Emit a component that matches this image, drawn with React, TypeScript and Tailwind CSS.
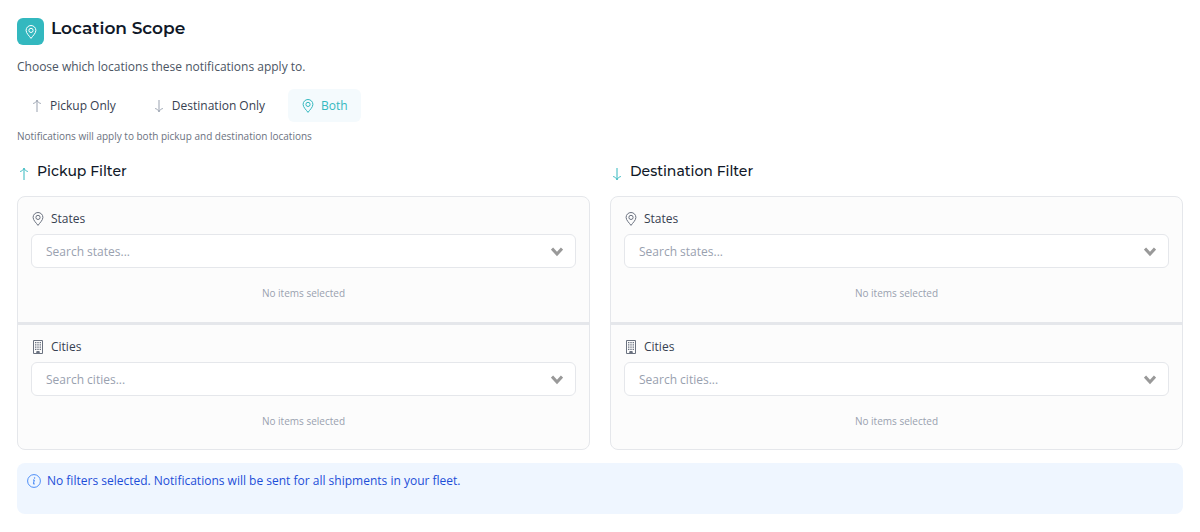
import { useState } from "react";
import type { ReactNode } from "react";
import clsx from "clsx";

type IconProps = { className?: string };

const PinIcon = ({ className }: IconProps) => (
  <svg viewBox="0 0 14 14" fill="none" stroke="currentColor" className={className}>
    <path d="M7 13.400C5.600 11.200 2.100 8.400 2.100 5.400a4.900 4.900 0 0 1 9.800 0c0 3-3.500 5.800-4.900 8Z" />
    <circle cx="7" cy="5.400" r="2.100" />
  </svg>
);

const ArrowUpIcon = ({ className }: IconProps) => (
  <svg viewBox="0 0 14 14" fill="none" stroke="currentColor" className={className}>
    <path d="M7 13V1.200M3.200 4.500C5 4 6.500 2.800 7 1.200c.5 1.600 2 2.800 3.800 3.300" />
  </svg>
);

const ArrowDownIcon = ({ className }: IconProps) => (
  <svg viewBox="0 0 14 14" fill="none" stroke="currentColor" className={className}>
    <path d="M7 1v11.800M3.200 9.500C5 10 6.500 11.200 7 12.800c.5-1.600 2-2.800 3.800-3.300" />
  </svg>
);

const BuildingIcon = ({ className }: IconProps) => (
  <svg viewBox="0 0 14 14" fill="none" stroke="currentColor" className={className}>
    <path d="M2.500.5h9v13h-9z" />
    <path
      d="M4 2.700h1.400M6.300 2.700h1.400M8.600 2.700h1.400M4 4.900h1.400M6.300 4.900h1.400M8.600 4.900h1.400M4 7.100h1.400M6.300 7.100h1.400M8.600 7.100h1.400M4 9.300h1.400M6.300 9.300h1.400M8.600 9.300h1.400"
      strokeWidth="1.300"
    />
    <path d="M5.800 13.500v-2h2.400v2z" fill="currentColor" />
  </svg>
);

const InfoIcon = ({ className }: IconProps) => (
  <svg viewBox="0 0 14 14" fill="none" stroke="currentColor" className={className}>
    <circle cx="7" cy="7" r="6.400" strokeWidth=".9" />
    <path d="M6 6h1.300l-.9 3.800c0 .5.700.4 1.400 0" />
    <circle cx="7.600" cy="3.900" r=".5" fill="currentColor" strokeWidth=".4" />
  </svg>
);

const ChevronIcon = ({ className }: IconProps) => (
  <svg viewBox="0 0 12 10" fill="none" stroke="currentColor" strokeWidth="3" className={className}>
    <path d="m1 1.500 5 5.500 5-5.500" />
  </svg>
);

const scopes = [
  { id: "pickup", label: "Pickup Only", Icon: ArrowUpIcon },
  { id: "destination", label: "Destination Only", Icon: ArrowDownIcon },
  { id: "both", label: "Both", Icon: PinIcon },
];

type SearchFieldProps = {
  id: string;
  label: string;
  placeholder: string;
  icon: ReactNode;
};

const SearchField = ({ id, label, placeholder, icon }: SearchFieldProps) => (
  <div className="px-[13px] pt-3 pb-[19px] last:pb-[18px]">
    <label htmlFor={id} className="flex items-center gap-1.5 text-[12px] leading-5 text-[#374151]">
      <span className="text-[#6b7280]">{icon}</span>
      {label}
    </label>
    <div className="mt-[5px] flex h-[34px] items-center rounded-md border border-gray-200 bg-white pt-0.5 pr-3 pl-3.5">
      <input
        id={id}
        type="text"
        placeholder={placeholder}
        className="min-w-0 flex-1 bg-transparent text-[12px] text-gray-700 outline-none placeholder:text-gray-400"
      />
      <button type="button" aria-label={"Show " + label.toLowerCase()} className="text-[#999999]">
        <ChevronIcon className="h-2.5 w-3" />
      </button>
    </div>
    <p className="mt-[15px] text-center text-[10px] leading-5 text-gray-400">No items selected</p>
  </div>
);

type FilterProps = { id: string; title: string; icon: ReactNode };

const FilterColumn = ({ id, title, icon }: FilterProps) => (
  <section>
    <h3 className="flex items-start gap-1.5 font-[Montserrat,Inter,sans-serif] text-[14px] leading-5 font-medium text-gray-900">
      <span className="pt-1.5 text-[#33b8bf]">{icon}</span>
      {title}
    </h3>
    <div className="mt-[15px] rounded-lg border border-gray-200 bg-[#fcfcfc]">
      <SearchField
        id={id + "-states"}
        label="States"
        placeholder="Search states..."
        icon={<PinIcon className="size-3.5" />}
      />
      <div className="h-[3px] bg-gray-200" />
      <SearchField
        id={id + "-cities"}
        label="Cities"
        placeholder="Search cities..."
        icon={<BuildingIcon className="size-3.5" />}
      />
    </div>
  </section>
);

const App = () => {
  const [scope, setScope] = useState("both");

  return (
    <main className="bg-white px-[17px] py-[18px] font-['Open_Sans','Noto_Sans',sans-serif]">
      <div className="flex items-start gap-[7px]">
        <span className="flex size-[27px] items-center justify-center rounded-md bg-[#33b8bf] text-white">
          <PinIcon className="size-3.5" />
        </span>
        <h2 className="font-[Montserrat,Inter,sans-serif] text-[17px] leading-5 font-semibold text-gray-900">
          Location Scope
        </h2>
      </div>
      <p className="mt-3 text-[12px] leading-5 text-[#4b5563]">
        Choose which locations these notifications apply to.
      </p>
      <div className="mt-3 flex gap-2.5">
        {scopes.map(({ id, label, Icon }) => (
          <button
            key={id}
            type="button"
            aria-pressed={scope === id}
            onClick={() => setScope(id)}
            className={clsx(
              "flex h-[33px] items-center gap-1.5 rounded-md px-[13px] text-[12px]",
              scope === id ? "bg-[#f4fafd] text-[#33b8bf]" : "text-[#374151]"
            )}
          >
            <Icon className={clsx("size-3.5", scope !== id && "text-gray-400")} />
            {label}
          </button>
        ))}
      </div>
      <p className="mt-1 text-[10px] leading-5 text-[#6b7280]">
        Notifications will apply to both pickup and destination locations
      </p>
      <div className="mt-[15px] grid grid-cols-2 gap-5">
        <FilterColumn
          id="pickup"
          title="Pickup Filter"
          icon={<ArrowUpIcon className="size-3.5" />}
        />
        <FilterColumn
          id="destination"
          title="Destination Filter"
          icon={<ArrowDownIcon className="size-3.5" />}
        />
      </div>
      <div className="mt-[13px] flex items-start gap-1.5 rounded-lg bg-[#eff6ff] px-2.5 pt-2 pb-[23px] text-[12px] leading-5 text-[#1d4ed8]">
        <InfoIcon className="mt-[3px] size-3.5 text-[#3b82f6]" />
        <p>No filters selected. Notifications will be sent for all shipments in your fleet.</p>
      </div>
    </main>
  );
};

export default App;
